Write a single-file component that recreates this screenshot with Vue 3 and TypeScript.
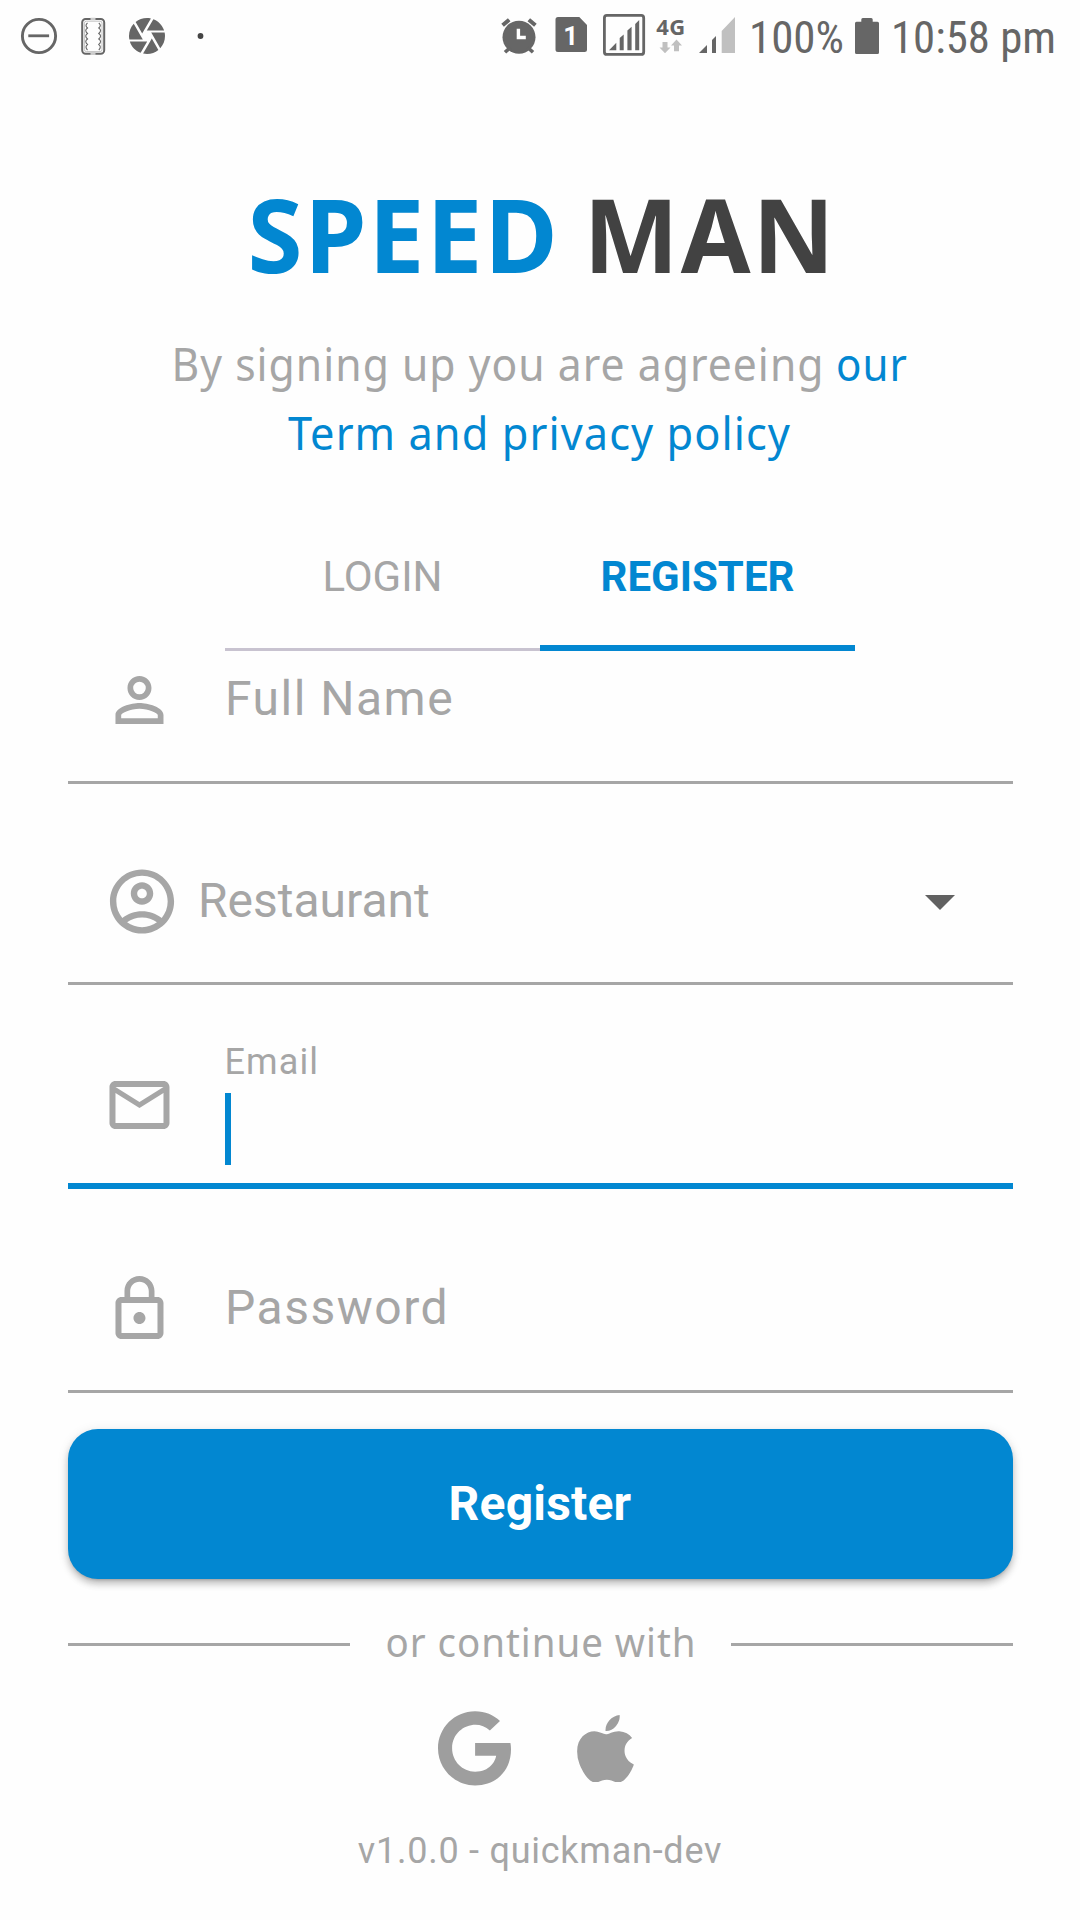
<script setup lang="ts">
import { ref } from 'vue'

type Tab = 'login' | 'register'
const activeTab = ref<Tab>('register')
const tabs: { id: Tab; label: string }[] = [
  { id: 'login', label: 'LOGIN' },
  { id: 'register', label: 'REGISTER' },
]
</script>

<template>
  <main class="screen">
    <header class="status">
      <svg width="216" height="72" viewBox="0 0 216 72" fill="#666">
        <circle cx="39" cy="36" r="16.6" fill="none" stroke="#666" stroke-width="2.9" />
        <rect x="28.3" y="34.4" width="20.8" height="2.8" />
        <rect x="82.2" y="19" width="22" height="34.8" rx="3.5" fill="none" stroke="#666" stroke-width="2" />
        <rect x="84.4" y="21.2" width="17.6" height="30.4" rx="2" fill="none" stroke="#aaa" stroke-width=".7" />
        <path d="M90.5 19h5M90.5 53.8h5" stroke="#ccc" stroke-width="2.4" />
        <path d="M87.5 23q-3 2.4 0 5q-3.5 2.4 0 5.5q-3.5 2.4 0 5.5q-3.5 2.4 0 5.5q-3 2.4 0 5.5M98.8 23q3 2.4 0 5q3.5 2.4 0 5.5q3.5 2.4 0 5.5q3.5 2.4 0 5.5q3 2.4 0 5.5" fill="none" stroke="#666" stroke-width="1.1" />
        <path transform="translate(125.4 14.4) scale(1.8)" d="M9.4 10.5l4.77-8.26C13.47 2.09 12.75 2 12 2c-2.4 0-4.6.85-6.32 2.25l3.66 6.35.06-.1zM21.54 9c-.92-2.92-3.15-5.26-6-6.34L11.88 9h9.66zm.26 1h-7.49l.29.5 4.76 8.25C21 16.97 22 14.61 22 12c0-.69-.07-1.35-.2-2zM8.54 12l-3.9-6.75C3.01 7.03 2 9.39 2 12c0 .69.07 1.35.2 2h7.49l-1.15-2zm-6.08 3c.92 2.92 3.15 5.26 6 6.34L12.12 15H2.46zm11.27 0l-3.9 6.76c.7.15 1.42.24 2.17.24 2.4 0 4.6-.85 6.32-2.25l-3.66-6.35-.93 1.6z" />
        <circle cx="200.5" cy="36" r="2.9" fill="#444" />
      </svg>
      <svg width="590" height="72" viewBox="490 0 590 72" fill="#666">
        <circle cx="519" cy="37.2" r="16.5" />
        <path d="M502.6 25.3l6.6-5.6M535.4 25.3l-6.6-5.6" stroke="#666" stroke-width="4" />
        <path d="M505 52.3l5-4.6M533 52.3l-5-4.6" stroke="#666" stroke-width="3.6" />
        <path d="M518.4 28.7v8.8h7.4" fill="none" stroke="#fff" stroke-width="3.4" />
        <path d="M558 17h21.3l7.7 8v24.5a2.5 2.5 0 0 1-2.5 2.5H558a2.5 2.5 0 0 1-2.5-2.5v-30A2.5 2.5 0 0 1 558 17z" />
        <text x="570.6" y="45.2" text-anchor="middle" class="sim">1</text>
        <rect x="604.4" y="15.4" width="39.3" height="39" rx="2.5" fill="none" stroke="#666" stroke-width="2.8" />
        <path d="M609 50.2l7.3-7.5v7.5zM619.7 50.2V38l4-3.5v15.7zM627.4 50.2V30.5l4.2-3.7v23.4zM635.2 50.2V24l4-4v30.2z" />
        <text x="656.3" y="34.7" textLength="29" class="net">4G</text>
        <path fill="#c0c0c0" d="M662.5 42h5v5.5h3L665 53.2l-5.5-5.7h3zM674 51.2h5v-5.6h3l-5.5-6-5.5 6h3zM721.7 53V31L735 17v36z" />
        <path d="M699 53l8-8v8zM712 53V40l4-4v17z" />
        <text x="749" y="53" textLength="95" lengthAdjust="spacingAndGlyphs" class="clock">100%</text>
        <path d="M861.3 21.8v-2.3a1.5 1.5 0 0 1 1.5-1.5h8.4a1.5 1.5 0 0 1 1.5 1.5v2.3h4.8a1.5 1.5 0 0 1 1.5 1.5v29.2a1.5 1.5 0 0 1-1.5 1.5h-21a1.5 1.5 0 0 1-1.5-1.5V23.3a1.5 1.5 0 0 1 1.5-1.5z" />
        <text x="891" y="53" textLength="165" lengthAdjust="spacingAndGlyphs" class="clock">10:58 pm</text>
      </svg>
    </header>

    <svg class="brand" width="1080" height="236" viewBox="0 72 1080 236">
      <text x="247.5" y="273" textLength="312" lengthAdjust="spacingAndGlyphs" fill="#0287d1">SPEED</text>
      <text x="583.5" y="273" textLength="253" lengthAdjust="spacingAndGlyphs" fill="#424242">MAN</text>
    </svg>

    <svg class="terms" width="1080" height="192" viewBox="0 308 1080 192">
      <text x="171.500" y="381" textLength="653" lengthAdjust="spacingAndGlyphs" fill="#a6a6a6">By signing up you are agreeing</text>
      <text x="836" y="381" textLength="72" lengthAdjust="spacingAndGlyphs" fill="#0287d1">our</text>
      <text x="288" y="450.3" textLength="503" lengthAdjust="spacingAndGlyphs" fill="#0287d1">Term and privacy policy</text>
    </svg>

    <nav class="tabs">
      <button v-for="t in tabs" :key="t.id" type="button" :class="{ active: t.id === activeTab }" @click="activeTab = t.id">
        {{ t.label }}
      </button>
    </nav>

    <form class="form" @submit.prevent>
      <div class="field name">
        <svg class="icon" viewBox="-.16 0 24 24"><path d="M12 5.9a2.1 2.1 0 1 1 0 4.2 2.1 2.1 0 0 1 0-4.2m0 9c2.97 0 6.1 1.46 6.1 2.1v1.1H5.9V17c0-.64 3.13-2.1 6.1-2.1M12 4C9.79 4 8 5.79 8 8s1.79 4 4 4 4-1.79 4-4-1.79-4-4-4zm0 9c-2.67 0-8 1.34-8 4v3h16v-3c0-2.66-5.33-4-8-4z" /></svg>
        <span class="placeholder">Full Name</span>
      </div>

      <div class="field restaurant">
        <svg class="icon large" viewBox="-.16 0 24 24"><path d="M12 2C6.48 2 2 6.48 2 12s4.48 10 10 10 10-4.48 10-10S17.52 2 12 2zM7.35 18.5C8.66 17.56 10.26 17 12 17s3.34.56 4.65 1.5C15.34 19.44 13.74 20 12 20s-3.34-.56-4.65-1.5zm10.79-1.38C16.45 15.8 14.32 15 12 15s-4.45.8-6.14 2.12C4.7 15.73 4 13.95 4 12c0-4.42 3.58-8 8-8s8 3.58 8 8c0 1.95-.7 3.73-1.86 5.12z" /><path d="M12 6c-1.93 0-3.5 1.57-3.5 3.5S10.07 13 12 13s3.5-1.57 3.5-3.5S13.93 6 12 6zm0 5c-.83 0-1.5-.67-1.5-1.5S11.17 8 12 8s1.5.67 1.5 1.5S12.83 11 12 11z" /></svg>
        <span class="placeholder">Restaurant</span>
        <svg class="arrow" viewBox="0 0 24 24"><path d="M7 10l5 5 5-5z" /></svg>
      </div>

      <div class="field email">
        <svg class="icon" viewBox="-.16 0 24 24"><path d="M22 6c0-1.1-.9-2-2-2H4c-1.1 0-2 .9-2 2v12c0 1.1.9 2 2 2h16c1.1 0 2-.9 2-2V6zm-2 0l-8 4.99L4 6h16zm0 12H4V8l8 5 8-5v10z" /></svg>
        <div class="entry">
          <label>Email</label>
          <i class="caret"></i>
        </div>
      </div>

      <div class="field password">
        <svg class="icon" viewBox="-.16 0 24 24"><path d="M12 17c1.1 0 2-.9 2-2s-.9-2-2-2-2 .9-2 2 .9 2 2 2zm6-9h-1V6c0-2.76-2.24-5-5-5S7 3.24 7 6v2H6c-1.1 0-2 .9-2 2v10c0 1.1.9 2 2 2h12c1.1 0 2-.9 2-2V10c0-1.1-.9-2-2-2zM8.9 6c0-1.71 1.39-3.1 3.1-3.1s3.1 1.39 3.1 3.1v2H8.9V6zM18 20H6V10h12v10z" /></svg>
        <span class="placeholder">Password</span>
      </div>

      <button class="submit" type="submit">Register</button>
    </form>

    <div class="divider">
      <hr />
      <svg width="381" height="65" viewBox="349 1612 381 65">
        <text x="384.500" y="1657" textLength="311" lengthAdjust="spacingAndGlyphs">or continue with</text>
      </svg>
      <hr />
    </div>

    <div class="social">
      <svg width="73" height="74.6" viewBox="0 8 488 496"><path d="M488 261.8C488 403.3 391.1 504 248 504 110.8 504 0 393.2 0 256S110.8 8 248 8c66.8 0 123 24.5 166.3 64.9l-67.5 64.9C258.5 52.6 94.3 116.6 94.3 256c0 86.5 69.1 156.6 153.7 156.6 98.2 0 135-70.4 140.8-106.9H248v-85.3h236.1c2.3 12.7 3.9 24.9 3.9 41.4z" /></svg>
      <svg width="57" height="67.5" viewBox="4 32 376.5 448"><path d="M318.7 268.7c-.2-36.7 16.4-64.4 50-84.8-18.8-26.9-47.2-41.7-84.7-44.6-35.5-2.8-74.3 20.7-88.5 20.7-15 0-49.4-19.7-76.4-19.7C63.3 141.2 4 184.8 4 273.5q0 39.3 14.4 81.2c12.8 36.7 59 126.7 107.2 125.2 25.2-.6 43-17.9 75.8-17.9 31.8 0 48.3 17.9 76.4 17.9 48.6-.7 90.4-82.5 102.6-119.3-65.2-30.7-61.7-90-61.7-91.9zm-56.6-164.2c27.3-32.4 24.8-61.9 24-72.5-24.1 1.4-52 16.4-67.9 34.9-17.5 19.8-27.8 44.3-25.6 71.9 26.1 2 49.9-11.4 69.5-34.3z" /></svg>
    </div>

    <footer class="version">v1.0.0 - quickman-dev</footer>
  </main>
</template>

<style>
body {
  margin: 0;
  background: #fefefe;
}
</style>

<style scoped>
.screen {
  box-sizing: border-box;
  display: flex;
  flex-direction: column;
  width: 1080px;
  height: 1920px;
  overflow: hidden;
  background: #fefefe;
  color: #a6a6a6;
  font-family: Roboto, "Liberation Sans", sans-serif;
}
svg {
  display: block;
  flex: none;
}
.status {
  display: flex;
  justify-content: space-between;
  height: 72px;
}
.clock {
  font-size: 45px;
  font-stretch: 75%;
}
.sim {
  fill: #fff;
  font-size: 26px;
  font-weight: 700;
}
.net {
  font: 700 22px "Noto Sans", sans-serif;
}
.brand text {
  font: 750 102.5px "Noto Sans", sans-serif;
  letter-spacing: 2px;
}
.terms text {
  font-family: "Noto Sans", sans-serif;
  font-size: 45px;
  font-stretch: 82%;
  letter-spacing: 1.1px;
}
button {
  padding: 0;
  border: 0;
  background: none;
  color: inherit;
  font: inherit;
}
.tabs {
  display: flex;
  width: 630px;
  height: 151px;
  margin: 0 auto;
}
.tabs button {
  box-sizing: border-box;
  flex: 1;
  padding-top: 6px;
  border-bottom: 3px solid #c8c3d0;
  font-size: 42px;
  line-height: 142px;
}
.tabs button.active {
  padding-top: 8px;
  border-bottom: 6px solid #0287d1;
  color: #0287d1;
  font-weight: 700;
  line-height: 137px;
}
.form {
  width: 945px;
  margin: 0 auto;
}
.field {
  box-sizing: border-box;
  display: flex;
  align-items: flex-start;
  padding-left: 35.5px;
  border-bottom: 3px solid #a6a6a6;
}
.icon {
  width: 72px;
  height: 72px;
  fill: #a6a6a6;
}
.icon.large {
  width: 77px;
  height: 77px;
}
.placeholder {
  margin-left: 50px;
  font-size: 48px;
  letter-spacing: 1.5px;
  line-height: 72px;
  white-space: nowrap;
}
.name {
  height: 133px;
  padding-top: 13px;
}
.name .placeholder {
  margin-top: -1px;
}
.restaurant {
  height: 201px;
  padding-top: 78.5px;
}
.restaurant .placeholder {
  margin-left: 18px;
  line-height: 75px;
  letter-spacing: 0;
}
.arrow {
  width: 72px;
  height: 72px;
  margin: 2px 36.5px 0 auto;
  fill: #616161;
}
.email {
  height: 204px;
  padding-top: 84px;
  border-bottom: 6px solid #0287d1;
}
.entry {
  margin: -30px 0 0 49.5px;
}
.entry label {
  display: block;
  height: 54px;
  font-size: 36px;
  letter-spacing: 1.1px;
  line-height: 46px;
}
.caret {
  display: block;
  width: 6.5px;
  height: 72px;
  background: #0287d1;
}
.password {
  height: 204px;
  padding-top: 84px;
}
.password .placeholder {
  margin-top: -1.5px;
}
.submit {
  display: block;
  width: 945px;
  height: 150px;
  margin-top: 36px;
  border-radius: 30px;
  background: #0287d1;
  box-shadow: 0 3px 3px -2px rgba(0, 0, 0, .18), 0 5px 7px rgba(0, 0, 0, .2), 0 2px 12px rgba(0, 0, 0, .1);
  color: #fff;
  font-size: 48px;
  font-weight: 700;
  letter-spacing: .2px;
  line-height: 147px;
  padding-bottom: 2px;
}
.divider {
  display: flex;
  align-items: center;
  width: 945px;
  height: 65px;
  margin: 33px auto 0;
}
.divider hr {
  flex: 1;
  height: 3px;
  margin: 0;
  border: 0;
  background: #a6a6a6;
}
.divider text {
  fill: #a6a6a6;
  font-family: "Noto Sans", sans-serif;
  font-size: 40.5px;
  font-stretch: 82%;
  letter-spacing: 1px;
}
.social {
  display: flex;
  align-items: center;
  gap: 66px;
  height: 75px;
  margin: 34px 0 0 438px;
  fill: #9e9e9e;
}
.version {
  margin-top: 35.5px;
  font-size: 36px;
  letter-spacing: .75px;
  line-height: 58px;
  text-align: center;
}
</style>
